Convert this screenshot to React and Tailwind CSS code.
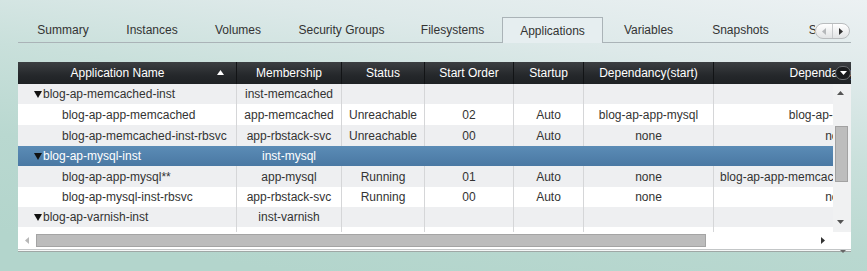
import React from "react";

const W = ["w-[219px]", "w-[105px]", "w-[83px]", "w-[89px]", "w-[70px]", "w-[130px]", "w-[250px]"];

const tabs = [
  ["Summary", "w-[90px]"],
  ["Instances", "w-[88px]"],
  ["Volumes", "w-[84px]"],
  ["Security Groups", "w-[123px]"],
  ["Filesystems", "w-[99px]"],
  ["Applications", "w-[101px]", true],
  ["Variables", "w-[91px]"],
  ["Snapshots", "w-[93px]"],
  ["Scripts", "w-[80px]"],
];

const headers = ["Application Name", "Membership", "Status", "Start Order", "Startup", "Dependancy(start)", "Dependancy(stop)"];

const rows = [
  { kind: "group", bg: "gray", h: "h-[20px]", cells: ["blog-ap-memcached-inst", "inst-memcached", "", "", "", "", ""] },
  { kind: "child", bg: "white", h: "h-[21px]", cells: ["blog-ap-app-memcached", "app-memcached", "Unreachable", "02", "Auto", "blog-ap-app-mysql", "blog-ap-app-mysql"] },
  { kind: "child", bg: "gray", h: "h-[21px]", cells: ["blog-ap-memcached-inst-rbsvc", "app-rbstack-svc", "Unreachable", "00", "Auto", "none", "none"] },
  { kind: "group", bg: "sel", h: "h-[20px]", cells: ["blog-ap-mysql-inst", "inst-mysql", "", "", "", "", ""] },
  { kind: "child", bg: "gray", h: "h-[21px]", cells: ["blog-ap-app-mysql**", "app-mysql", "Running", "01", "Auto", "none", "blog-ap-app-memcached,blog-ap-app-varnish"], leftLast: true },
  { kind: "child", bg: "white", h: "h-[20px]", cells: ["blog-ap-mysql-inst-rbsvc", "app-rbstack-svc", "Running", "00", "Auto", "none", "none"] },
  { kind: "group", bg: "gray", h: "h-[20px]", cells: ["blog-ap-varnish-inst", "inst-varnish", "", "", "", "", ""] },
];

function Tri({ dir = "down", color = "#111", w = 8, h = 7, className = "" }) {
  let pts;
  if (dir === "down") pts = `0,0 ${w},0 ${w / 2},${h}`;
  else if (dir === "up") pts = `0,${h} ${w},${h} ${w / 2},0`;
  else if (dir === "left") pts = `${w},0 ${w},${h} 0,${h / 2}`;
  else pts = `0,0 0,${h} ${w},${h / 2}`;
  return (
    <svg width={w} height={h} viewBox={`0 0 ${w} ${h}`} className={className}>
      <polygon points={pts} fill={color} />
    </svg>
  );
}

function Row({ r }) {
  const bg =
    r.bg === "sel"
      ? "bg-[linear-gradient(#5b8cb6,#4a78a3)] text-white"
      : r.bg === "gray"
      ? "bg-[#eeeff1] text-[#333]"
      : "bg-white text-[#333]";
  const line = r.bg === "sel" ? "border-r border-transparent" : "border-r border-[#d5d6d8]";
  return (
    <div className={`flex ${r.h} ${bg}`}>
      {r.cells.map((c, i) => {
        if (i === 0) {
          return (
            <div key={i} className={`${W[0]} ${line} flex items-center shrink-0 whitespace-nowrap ${r.kind === "group" ? "pl-[16px]" : "pl-[44px]"}`}>
              {r.kind === "group" && <Tri dir="down" color={r.bg === "sel" ? "#111" : "#111"} w={8} h={7} className="mr-[1px] mt-[1px]" />}
              <span>{c}</span>
            </div>
          );
        }
        const left = r.leftLast && i === 6;
        return (
          <div key={i} className={`${W[i]} ${line} flex items-center shrink-0 whitespace-nowrap overflow-hidden ${left ? "justify-start pl-[6px]" : "justify-center"}`}>
            {c}
          </div>
        );
      })}
    </div>
  );
}

export default function App() {
  return (
    <div className="w-[867px] h-[271px] overflow-hidden relative bg-[linear-gradient(188deg,#ecf1f3_0%,#dde9e9_22%,#c9e0db_42%,#b9d8d0_65%,#b3d5cc_90%)] font-['Liberation_Sans',Arial,sans-serif] text-[12px]">
      {/* Tabs */}
      <div className="pt-[17px] pl-[18px]">
        <div className="relative w-[833px] h-[26px] border-b border-[#aab3b7]">
          <div className="flex h-[26px] overflow-hidden w-[797px]">
            {tabs.map(([t, w, active]) => (
              <div
                key={t}
                className={`${w} shrink-0 h-[26px] flex items-center justify-center text-[#333] whitespace-nowrap ${
                  active ? "border border-b-0 border-[#aab3b7] bg-[#e6eef0] h-[27px]" : ""
                }`}
              >
                {t}
              </div>
            ))}
          </div>
          {/* scroll pill */}
          <div className="absolute left-[797px] top-[6px] w-[35px] h-[16px] rounded-full border border-[#b9bcbe] bg-[linear-gradient(#ffffff,#e2e4e5)] flex items-center">
            <div className="w-1/2 h-full flex items-center justify-center border-r border-[#c8cacc]">
              <Tri dir="left" color="#b5b8ba" w={4} h={7} />
            </div>
            <div className="w-1/2 h-full flex items-center justify-center">
              <Tri dir="right" color="#333" w={4} h={7} />
            </div>
          </div>
        </div>
      </div>

      {/* Table */}
      <div className="ml-[18px] mt-[19px] w-[833px] relative">
        {/* header */}
        <div className="relative h-[22px] w-[833px] overflow-hidden bg-[linear-gradient(#3c3f42,#25282b_60%,#1e2124)] text-white">
          <div className="flex h-full w-[946px]">
            {headers.map((h, i) => (
              <div
                key={h}
                className={`${W[i]} shrink-0 h-full flex items-center justify-center whitespace-nowrap border-r border-[#121416] relative ${i === 0 ? "pr-[19px]" : ""}`}
              >
                {h}
                {i === 0 && (
                  <div className="absolute right-[12px] top-[8px]">
                    <Tri dir="up" color="#ffffff" w={7} h={5} />
                  </div>
                )}
              </div>
            ))}
          </div>
          <div className="absolute right-[0px] top-[4px] w-[16px] h-[14px] rounded-[7px] border border-[#6a6d70] bg-[#1a1c1e] flex items-center justify-center">
            <Tri dir="down" color="#ffffff" w={7} h={4} />
          </div>
        </div>

        {/* body */}
        <div className="flex h-[148px]">
          <div className="w-[815px] h-full overflow-hidden bg-white">
            <div className="w-[946px] h-full flex flex-col">
              {rows.map((r, i) => (
                <Row key={i} r={r} />
              ))}
              <div className="flex flex-1">
                {W.map((w, i) => (
                  <div key={i} className={`${w} shrink-0 border-r border-[#d5d6d8]`} />
                ))}
              </div>
            </div>
          </div>
          {/* vertical scrollbar */}
          <div className="w-[18px] h-full bg-[#f0f1f2] relative">
            <div className="absolute left-[4px] top-[7px]">
              <Tri dir="up" color="#555" w={7} h={4} />
            </div>
            <div className="absolute left-[2px] top-[42px] w-[13px] h-[56px] bg-[#bdbdbd] border border-[#a2a2a2]" />
            <div className="absolute left-[4px] top-[136px]">
              <Tri dir="down" color="#555" w={7} h={4} />
            </div>
          </div>
        </div>

        {/* horizontal scrollbar */}
        <div className="flex h-[17px] bg-white">
          <div className="w-[815px] h-full relative">
            <div className="absolute left-[7px] top-[5px]">
              <Tri dir="left" color="#b8b8b8" w={4} h={7} />
            </div>
            <div className="absolute left-[18px] top-[2px] w-[670px] h-[13px] bg-[#bcbcbc] border border-[#a4a4a4]" />
            <div className="absolute left-[803px] top-[5px]">
              <Tri dir="right" color="#333" w={4} h={7} />
            </div>
          </div>
          <div className="w-[18px] h-full bg-white" />
        </div>
        <div className="h-[1px] bg-[#c3c6c7]" />
        <div className="h-[1px] bg-[#f4f6f6]" />
        <div className="h-[1px] bg-[#9fa7a5]" />
        <div className="absolute left-[822px] top-[188px]">
          <Tri dir="down" color="#666" w={6} h={3} />
        </div>
      </div>
    </div>
  );
}
